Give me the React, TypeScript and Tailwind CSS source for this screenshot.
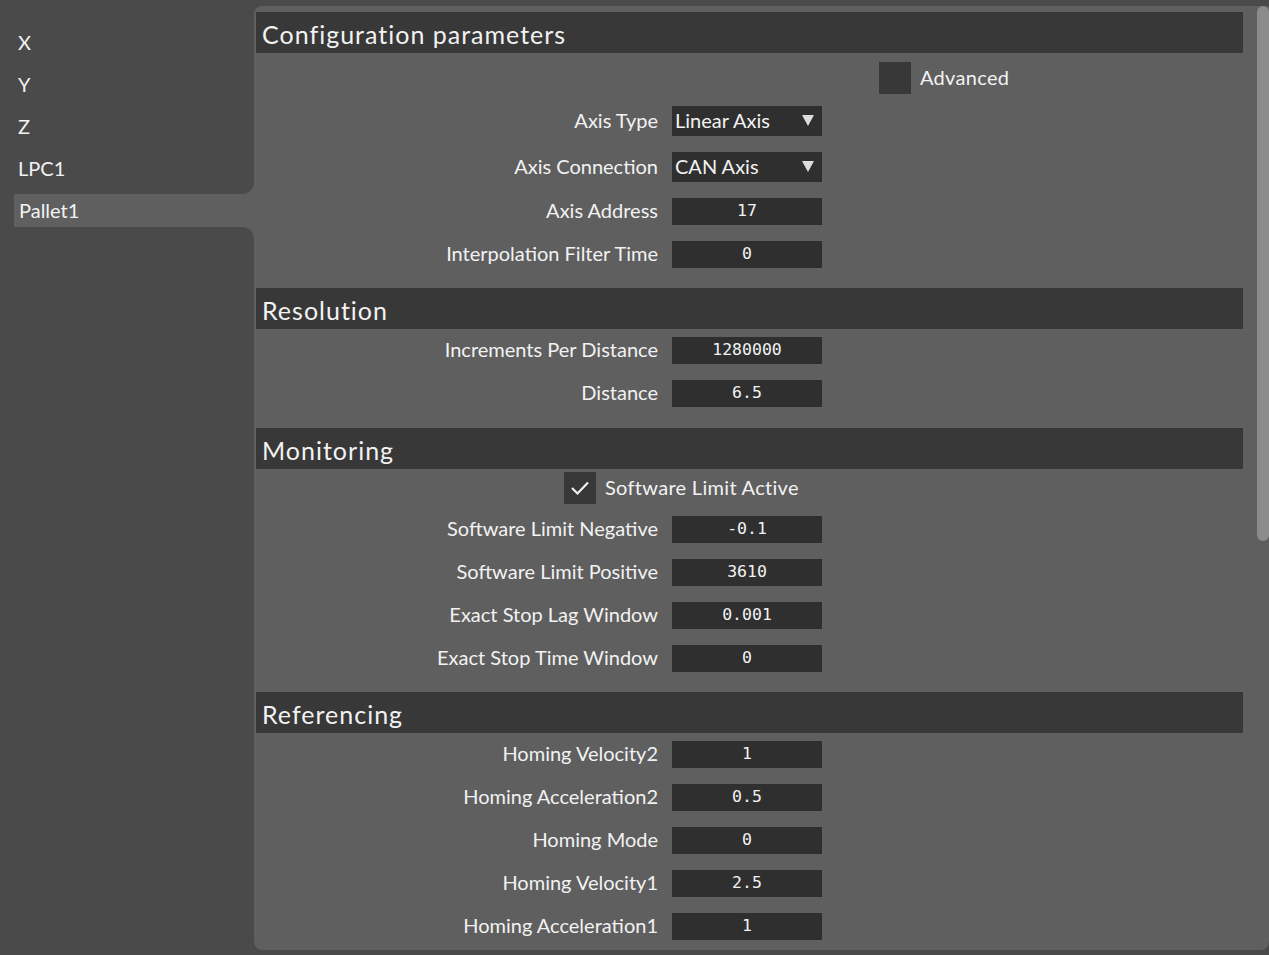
import React from "react";

type Row =
  | { kind: "field"; label: string; value: string; mt: string }
  | { kind: "select"; label: string; value: string; mt: string }
  | { kind: "check"; label: string; checked: boolean; pl: string; mt: string };

interface Section {
  title: string;
  body: string;
  rows: Row[];
}

const sections: Section[] = [
  {
    title: "Configuration parameters",
    body: "pt-[9px] pb-[20px]",
    rows: [
      { kind: "check", label: "Advanced", checked: false, pl: "pl-[623px]", mt: "" },
      { kind: "select", label: "Axis Type", value: "Linear Axis", mt: "mt-[12px]" },
      { kind: "select", label: "Axis Connection", value: "CAN Axis", mt: "mt-[16px]" },
      { kind: "field", label: "Axis Address", value: "17", mt: "mt-[16px]" },
      { kind: "field", label: "Interpolation Filter Time", value: "0", mt: "mt-[16px]" },
    ],
  },
  {
    title: "Resolution",
    body: "pt-[8px] pb-[21px]",
    rows: [
      { kind: "field", label: "Increments Per Distance", value: "1280000", mt: "" },
      { kind: "field", label: "Distance", value: "6.5", mt: "mt-[16px]" },
    ],
  },
  {
    title: "Monitoring",
    body: "pt-[3px] pb-[20px]",
    rows: [
      { kind: "check", label: "Software Limit Active", checked: true, pl: "pl-[308px]", mt: "" },
      { kind: "field", label: "Software Limit Negative", value: "-0.1", mt: "mt-[12px]" },
      { kind: "field", label: "Software Limit Positive", value: "3610", mt: "mt-[16px]" },
      { kind: "field", label: "Exact Stop Lag Window", value: "0.001", mt: "mt-[16px]" },
      { kind: "field", label: "Exact Stop Time Window", value: "0", mt: "mt-[16px]" },
    ],
  },
  {
    title: "Referencing",
    body: "pt-[8px] pb-[20px]",
    rows: [
      { kind: "field", label: "Homing Velocity2", value: "1", mt: "" },
      { kind: "field", label: "Homing Acceleration2", value: "0.5", mt: "mt-[16px]" },
      { kind: "field", label: "Homing Mode", value: "0", mt: "mt-[16px]" },
      { kind: "field", label: "Homing Velocity1", value: "2.5", mt: "mt-[16px]" },
      { kind: "field", label: "Homing Acceleration1", value: "1", mt: "mt-[16px]" },
    ],
  },
];

const axes = ["X", "Y", "Z", "LPC1"];

function RowView({ row }: { row: Row }) {
  if (row.kind === "check") {
    return (
      <div className={`flex items-center ${row.pl} ${row.mt}`}>
        <div className="w-[32px] h-[32px] bg-[#383838] flex items-center justify-center">
          {row.checked && (
            <svg width="20" height="16" viewBox="0 0 20 16">
              <polyline points="2,8 7.5,13.5 18,2.5" fill="none" stroke="#f2f2f2" strokeWidth="2.2" />
            </svg>
          )}
        </div>
        <span className="ml-[9px] text-[20px] tracking-[0.3px] pb-[2px]">{row.label}</span>
      </div>
    );
  }
  return (
    <div className={`flex items-center ${row.mt}`}>
      <span className="w-[402px] text-right text-[20px] leading-none pb-[3px]">{row.label}</span>
      {row.kind === "select" ? (
        <div className="ml-[14px] w-[150px] h-[30px] bg-[#2f2f2f] pl-[3px] pr-[8px] pb-[2px] flex items-center justify-between text-[20px]">
          <span>{row.value}</span>
          <svg width="12" height="11" viewBox="0 0 12 11" className="mt-[1px]">
            <polygon points="0,0 12,0 6,11" fill="#dcdcdc" />
          </svg>
        </div>
      ) : (
        <div className="ml-[14px] w-[150px] h-[27px] bg-[#2f2f2f] flex items-center justify-center font-['DejaVu_Sans_Mono',monospace] text-[16.5px]">
          {row.value}
        </div>
      )}
    </div>
  );
}

export default function App() {
  return (
    <div className="w-[1269px] h-[955px] bg-[#4a4a4a] flex overflow-hidden font-['Lato',sans-serif] text-[#f2f2f2]">
      {/* Axis list */}
      <aside className="w-[254px] shrink-0 flex flex-col bg-[#5f5f5f]">
        <div className="h-[194px] bg-[#4a4a4a] rounded-br-[12px] pt-[21px] flex flex-col">
          {axes.map((a) => (
            <div key={a} className="h-[42px] flex items-center pl-[18px] text-[20px]">
              {a}
            </div>
          ))}
        </div>
        <div className="h-[33px] flex">
          <div className="w-[14px] bg-[#4a4a4a]" />
          <div className="flex-1 flex items-center pl-[5px] pb-[2px] text-[20px]">Pallet1</div>
        </div>
        <div className="flex-1 bg-[#4a4a4a] rounded-tr-[12px]" />
      </aside>

      {/* Parameters panel */}
      <main className="relative mt-[6px] h-[944px] flex-1 bg-[#5f5f5f] rounded-tl-[8px] rounded-b-[8px] overflow-hidden pt-[6px] pl-[2px] pr-[26px]">
        {sections.map((s) => (
          <section key={s.title}>
            <div className="h-[41px] bg-[#383838] pl-[6px] pt-[5px] flex items-center text-[25px] tracking-[1px]">
              {s.title}
            </div>
            <div className={`flex flex-col ${s.body}`}>
              {s.rows.map((r) => (
                <RowView key={r.label} row={r} />
              ))}
            </div>
          </section>
        ))}
        <div className="absolute right-0 top-0 w-[12px] h-[535px] bg-[#8c8c8c] rounded-[6px]" />
      </main>
    </div>
  );
}
